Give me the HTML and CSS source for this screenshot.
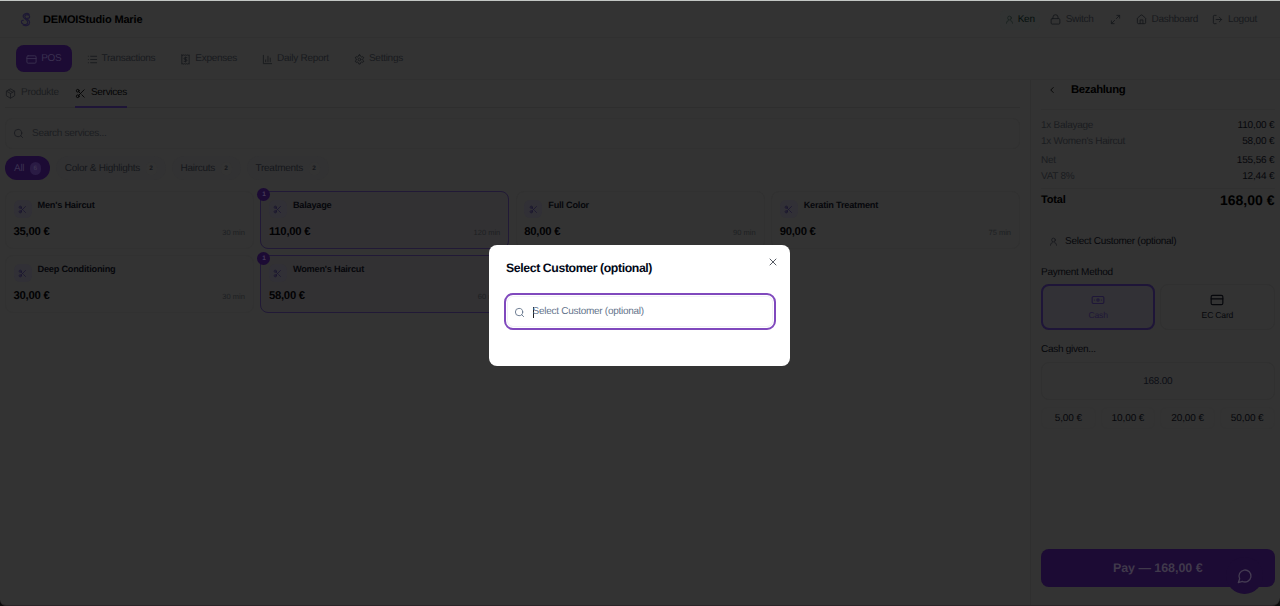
FILE: index.html
```html
<!DOCTYPE html>
<html lang="en">
<head>
<meta charset="utf-8">
<title>Studio Marie POS</title>
<link rel="stylesheet" href="styles.css">
</head>
<body>
<svg class="defs" aria-hidden="true">
  <symbol id="card" viewBox="0 0 24 24"><rect x="2" y="4" width="20" height="16" rx="2.5"/><path d="M2 10h20"/></symbol>
  <symbol id="list" viewBox="0 0 24 24"><path d="M8 5h13M8 12h13M8 19h13M3 5h.01M3 12h.01M3 19h.01"/></symbol>
  <symbol id="receipt" viewBox="0 0 24 24"><path d="M4 2v20l2-1 2 1 2-1 2 1 2-1 2 1 2-1 2 1V2l-2 1-2-1-2 1-2-1-2 1-2-1-2 1Z"/><path d="M15 8h-4a2 2 0 0 0 0 4h2a2 2 0 0 1 0 4H9M12 6.500v11"/></symbol>
  <symbol id="chart" viewBox="0 0 24 24"><path d="M3 3v18h18M8 17v-4M13 17V5M18 17V9"/></symbol>
  <symbol id="gear" viewBox="0 0 24 24"><path d="M12.220 2h-.440a2 2 0 0 0-2 2v.180a2 2 0 0 1-1 1.730l-.430.250a2 2 0 0 1-2 0l-.150-.080a2 2 0 0 0-2.730.730l-.220.380a2 2 0 0 0 .730 2.730l.150.100a2 2 0 0 1 1 1.720v.510a2 2 0 0 1-1 1.740l-.150.090a2 2 0 0 0-.730 2.730l.220.380a2 2 0 0 0 2.730.730l.150-.080a2 2 0 0 1 2 0l.430.250a2 2 0 0 1 1 1.730V20a2 2 0 0 0 2 2h.440a2 2 0 0 0 2-2v-.180a2 2 0 0 1 1-1.730l.430-.250a2 2 0 0 1 2 0l.150.080a2 2 0 0 0 2.730-.730l.220-.390a2 2 0 0 0-.730-2.730l-.150-.080a2 2 0 0 1-1-1.740v-.500a2 2 0 0 1 1-1.740l.150-.090a2 2 0 0 0 .730-2.730l-.220-.380a2 2 0 0 0-2.730-.730l-.150.080a2 2 0 0 1-2 0l-.430-.250a2 2 0 0 1-1-1.730V4a2 2 0 0 0-2-2z"/><circle cx="12" cy="12" r="3"/></symbol>
  <symbol id="user" viewBox="0 0 24 24"><circle cx="12" cy="8" r="5"/><path d="M4 22v-1a6 6 0 0 1 5-6M20 22v-1a6 6 0 0 0-5-6"/></symbol>
  <symbol id="lock" viewBox="0 0 24 24"><rect x="2.500" y="10" width="19" height="12" rx="2.500"/><path d="M6.500 10V7a5.500 5.500 0 0 1 11 0v3"/></symbol>
  <symbol id="expand" viewBox="0 0 24 24"><path d="M15 3h6v6M9 21H3v-6M21 3l-7 7M3 21l7-7"/></symbol>
  <symbol id="home" viewBox="0 0 24 24"><path d="M3 10a2 2 0 0 1 .7-1.500l7-6a2 2 0 0 1 2.600 0l7 6A2 2 0 0 1 21 10v9a2 2 0 0 1-2 2H5a2 2 0 0 1-2-2z"/><path d="M9 21v-8h6v8"/></symbol>
  <symbol id="logout" viewBox="0 0 24 24"><path d="M9 21H5a2 2 0 0 1-2-2V5a2 2 0 0 1 2-2h4M16 17l5-5-5-5M21 12H9"/></symbol>
  <symbol id="box" viewBox="0 0 24 24"><path d="M21 8a2 2 0 0 0-1-1.700l-7-4a2 2 0 0 0-2 0l-7 4A2 2 0 0 0 3 8v8a2 2 0 0 0 1 1.700l7 4a2 2 0 0 0 2 0l7-4a2 2 0 0 0 1-1.700ZM3.300 7l8.700 5 8.700-5M12 22V12M7.500 4.300l9 5.100"/></symbol>
  <symbol id="scissors" viewBox="0 0 24 24"><circle cx="6" cy="6" r="3"/><circle cx="6" cy="18" r="3"/><path d="M8.100 8.100 12 12M20 4 8.100 15.900M14.800 14.800 20 20"/></symbol>
  <symbol id="search" viewBox="0 0 24 24"><circle cx="11" cy="11" r="8"/><path d="m21 21-4.300-4.300"/></symbol>
  <symbol id="back" viewBox="0 0 24 24"><path d="m15 18-6-6 6-6"/></symbol>
  <symbol id="cash" viewBox="0 0 24 24"><rect x="2" y="6" width="20" height="12" rx="2"/><circle cx="12" cy="12" r="2"/><path d="M6 12h.01M18 12h.01"/></symbol>
  <symbol id="chat" viewBox="0 0 24 24"><path d="M7.900 20A9 9 0 1 0 4 16.100L2 22Z"/></symbol>
  <symbol id="close" viewBox="0 0 24 24"><path d="M18 6 6 18M6 6l12 12"/></symbol>
  <symbol id="logo" viewBox="0 0 24 32"><path d="M20 5C15 0 6 4 7 10c1 5 10 6 10 12 0 5-7 7-12 3M17 6c-4-2-8 2-6 5 2 4 10 5 10 11 0 7-9 9-14 6M17 13c5 1 5-5 2-7M7 18c-5-1-5 6-1 7"/></symbol>
</svg>

<div class="app">
  <header class="topbar">
    <div class="brand"><svg class="logo"><use href="#logo"/></svg><span>DEMOIStudio Marie</span></div>
    <div class="account">
      <span class="who"><svg class="i9"><use href="#user"/></svg>Ken</span>
      <span class="link switch"><svg><use href="#lock"/></svg>Switch</span>
      <span class="link full"><svg><use href="#expand"/></svg></span>
      <span class="link dash"><svg><use href="#home"/></svg>Dashboard</span>
      <span class="link"><svg><use href="#logout"/></svg>Logout</span>
    </div>
  </header>
  <nav class="mainnav">
    <a class="active"><svg><use href="#card"/></svg>POS</a>
    <a><svg><use href="#list"/></svg>Transactions</a>
    <a><svg><use href="#receipt"/></svg>Expenses</a>
    <a><svg><use href="#chart"/></svg>Daily Report</a>
    <a><svg><use href="#gear"/></svg>Settings</a>
  </nav>
  <div class="body">
    <main class="catalog">
      <div class="tabs">
        <a><svg><use href="#box"/></svg>Produkte</a>
        <a class="active"><svg><use href="#scissors"/></svg>Services</a>
      </div>
      <div class="search"><svg><use href="#search"/></svg>Search services...</div>
      <div class="chips">
        <span class="chip active">All<b>6</b></span>
        <span class="chip">Color &amp; Highlights<b>2</b></span>
        <span class="chip">Haircuts<b>2</b></span>
        <span class="chip">Treatments<b>2</b></span>
      </div>
      <div class="grid">
        <article class="item"><div class="name"><i><svg><use href="#scissors"/></svg></i>Men's Haircut</div><div class="meta"><strong>35,00 €</strong><small>30 min</small></div></article>
        <article class="item picked"><em>1</em><div class="name"><i><svg><use href="#scissors"/></svg></i>Balayage</div><div class="meta"><strong>110,00 €</strong><small>120 min</small></div></article>
        <article class="item"><div class="name"><i><svg><use href="#scissors"/></svg></i>Full Color</div><div class="meta"><strong>80,00 €</strong><small>90 min</small></div></article>
        <article class="item"><div class="name"><i><svg><use href="#scissors"/></svg></i>Keratin Treatment</div><div class="meta"><strong>90,00 €</strong><small>75 min</small></div></article>
        <article class="item"><div class="name"><i><svg><use href="#scissors"/></svg></i>Deep Conditioning</div><div class="meta"><strong>30,00 €</strong><small>30 min</small></div></article>
        <article class="item picked"><em>1</em><div class="name"><i><svg><use href="#scissors"/></svg></i>Women's Haircut</div><div class="meta"><strong>58,00 €</strong><small>60 min</small></div></article>
      </div>
    </main>
    <aside class="checkout">
      <h2><svg><use href="#back"/></svg>Bezahlung</h2>
      <dl class="lines">
        <div><dt>1x Balayage</dt><dd>110,00 €</dd></div>
        <div><dt>1x Women's Haircut</dt><dd>58,00 €</dd></div>
        <div class="net"><dt>Net</dt><dd>155,56 €</dd></div>
        <div><dt>VAT 8%</dt><dd>12,44 €</dd></div>
        <div class="total"><dt>Total</dt><dd>168,00 €</dd></div>
      </dl>
      <div class="customer"><svg class="i9"><use href="#user"/></svg>Select Customer (optional)</div>
      <div class="label">Payment Method</div>
      <div class="methods">
        <div class="method active"><svg><use href="#cash"/></svg>Cash</div>
        <div class="method"><svg><use href="#card"/></svg>EC Card</div>
      </div>
      <div class="label given">Cash given...</div>
      <div class="amount">168.00</div>
      <div class="quick"><span>5,00 €</span><span>10,00 €</span><span>20,00 €</span><span>50,00 €</span></div>
      <div class="pay">Pay — 168,00 €</div>
    </aside>
  </div>
  <div class="chat"><svg><use href="#chat"/></svg></div>
  <section class="dialog">
    <div class="dialog-head"><h1>Select Customer (optional)</h1><svg><use href="#close"/></svg></div>
    <div class="field"><svg><use href="#search"/></svg><span class="caret"></span>Select Customer (optional)</div>
  </section>
</div>
</body>
</html>
```

FILE: styles.css
```css
* { box-sizing: border-box; }
body {
  margin: 0;
  background: #0c0c0c;
  font: 10px/16px "Liberation Sans", Arial, sans-serif;
  letter-spacing: -0.27px;
  text-rendering: geometricPrecision;
  color: #06070b;
}
h1, h2, dl, dd { margin: 0; }
.defs { position: absolute; width: 0; height: 0; }
svg {
  width: 11px;
  height: 11px;
  flex: none;
  fill: none;
  stroke: currentColor;
  stroke-width: 2;
  stroke-linecap: round;
  stroke-linejoin: round;
}
svg.i9 { width: 9px; height: 9px; }

.app {
  position: relative;
  height: 606px;
  display: flex;
  flex-direction: column;
  overflow: hidden;
  background: #333;
  border-top: 1px solid #c3c7c4;
  border-bottom: 1px solid #2b2528;
  border-radius: 0 0 8px 6px;
}

.topbar {
  height: 37px;
  flex: none;
  padding: 1.500px 23px 0 20px;
  display: flex;
  align-items: center;
  justify-content: space-between;
  border-bottom: 1px solid #303030;
}
.brand { display: flex; align-items: center; gap: 12px; font-size: 11px; letter-spacing: -0.16px; font-weight: bold; color: #000; }
.logo { width: 11px; height: 15px; stroke: #1d1834; stroke-width: 2.500; }
.account { display: flex; align-items: center; color: #17191d; }
.account > span { display: flex; align-items: center; gap: 5px; }
.account .who { gap: 4px; height: 20px; padding: 0 5px; margin-right: 10px; background: #313333; border-radius: 5px; color: #05100d; }
.who svg { stroke: #15201d; }
.account .switch { margin-right: 16px; }
.account .full { margin-right: 15px; }
.account .dash { margin-right: 14px; }

.mainnav {
  height: 42px;
  flex: none;
  padding: 7px 16px 0 15.5px;
  display: flex;
  gap: 3.700px;
  border-bottom: 1px solid #303030;
}
.mainnav a {
  height: 27px;
  padding: 1.500px 10.7px 0;
  display: flex;
  align-items: center;
  gap: 4px;
  border-radius: 8px;
  color: #181a1e;
}
.mainnav a.active { background: #1c0b34; color: #3a3050; }

.body { flex: 1; display: flex; min-height: 0; }
.catalog { width: 1030px; flex: none; padding: 0 10px 0 5px; }
.tabs { display: flex; gap: 16px; height: 28px; border-bottom: 1px solid #2e2e2e; }
.tabs a { display: flex; align-items: center; gap: 5px; padding-top: 0.500px; color: #1b1d20; height: 28px; border-bottom: 2px solid transparent; }
.tabs a.active { color: #030304; border-color: #1e1537; }
.search {
  margin-top: 10px;
  height: 31px;
  padding-left: 7px;
  display: flex;
  align-items: center;
  gap: 8px;
  border: 1px solid #313131;
  border-radius: 7px;
  color: #1b1d21;
}
.chips { margin-top: 7px; display: flex; gap: 6px; }
.chip { height: 24px; padding: 1.500px 9px 0; display: flex; align-items: center; gap: 5.500px; border-radius: 12px; background: #323233; color: #15171b; }
.chip b { min-width: 11px; height: 13px; line-height: 13px; border-radius: 7px; text-align: center; font-size: 6.5px; letter-spacing: 0; background: #333; }
.chip.active { background: #1c0b34; color: #3b3150; }
.chip.active b { background: #2a1b44; }
.grid { margin-top: 11px; display: grid; grid-template-columns: repeat(4, 1fr); gap: 6px 6.500px; }
.item { position: relative; height: 58px; padding: 7px 8px 0 7.500px; border: 1px solid #313131; border-radius: 8px; }
.item.picked { border-color: #211936; background: #323133; }
.item em {
  position: absolute;
  left: -4px;
  top: -4px;
  width: 13px;
  height: 13px;
  border-radius: 50%;
  background: #1c0b34;
  color: #443a58;
  font: bold 6.500px/13px "Liberation Sans", Arial, sans-serif;
  text-align: center;
}
.name { display: flex; gap: 6px; font-size: 9.2px; letter-spacing: -0.22px; font-weight: bold; line-height: 13px; }
.name i { width: 18px; height: 18px; margin-top: 1px; display: grid; place-items: center; border-radius: 6px; background: #313036; color: #1a1430; }
.name svg { width: 9px; height: 9px; }
.meta { margin-top: 5px; display: flex; justify-content: space-between; align-items: center; line-height: 16px; }
.meta strong { font-size: 11.3px; letter-spacing: -0.24px; color: #020203; }
.meta small { font-size: 7.5px; letter-spacing: 0; color: #1d1f22; padding-top: 2px; }

.checkout { flex: 1; padding: 0 5.500px 18px 10px; border-left: 1px solid #2f2f2f; display: flex; flex-direction: column; }
.checkout h2 { height: 30px; padding: 1px 0 11px 6px; display: flex; align-items: center; gap: 14px; font-size: 11.3px; letter-spacing: -0.3px; line-height: 18px; color: #000; border-bottom: 1px solid #303030; }
.checkout h2 svg { width: 10px; height: 10px; }
.lines { padding-top: 8px; }
.lines > div { display: flex; justify-content: space-between; height: 16px; }
.lines dt { color: #1a1c20; }
.lines dd { letter-spacing: -0.150px; }
.lines .net { margin-top: 3px; }
.lines .total { margin-top: 3px; padding-top: 2px; height: 25px; border-top: 1px solid #303030; line-height: 18px; font-weight: bold; }
.lines .total dt { font-size: 11px; letter-spacing: -0.15px; color: #000; }
.lines .total dd { font-size: 14px; letter-spacing: 0; color: #000; }
.customer { margin-top: 16px; height: 24px; padding: 1.500px 0 0 8px; display: flex; align-items: center; gap: 7px; }
.customer svg { color: #15171c; }
.label { margin-top: 12px; }
.methods { margin-top: 3px; display: grid; grid-template-columns: 1fr 1fr; gap: 5px; }
.method { height: 46px; padding-top: 8px; display: flex; flex-direction: column; align-items: center; border: 1px solid #303030; border-radius: 8px; font-size: 8.600px; letter-spacing: -0.2px; line-height: 15px; }
.method svg { width: 14px; height: 14px; margin-bottom: 1px; }
.method.active { padding-top: 7px; border: 2px solid #1e1538; background: #323136; color: #1f1738; }
.label.given { margin-top: 12px; }
.amount { margin-top: 4px; height: 38px; padding-top: 1.500px; display: grid; place-items: center; border: 1px solid #303030; border-radius: 8px; color: #0c0e15; }
.quick { margin-top: 7px; display: grid; grid-template-columns: repeat(4, 1fr); gap: 5px; }
.quick span { height: 22px; padding-top: 1px; line-height: 20px; text-align: center; border: 1px solid #323232; border-radius: 6px; letter-spacing: -0.1px; }
.pay { margin-top: auto; height: 38px; line-height: 38px; border-radius: 8px; background: #1c0b34; color: #40394b; text-align: center; font-size: 12.500px; letter-spacing: -0.05px; font-weight: bold; }

.chat { position: absolute; left: 1226px; top: 556px; width: 37px; height: 37px; display: grid; place-items: center; border-radius: 50%; background: #1c0b34; color: #443b52; }
.chat svg { width: 16px; height: 16px; }

.dialog { position: absolute; left: 489px; top: 244px; width: 301px; height: 121px; padding: 14px 14px 0; border-radius: 8px; background: #fff; color: #020817; }
.dialog-head { display: flex; justify-content: space-between; padding-left: 3px; }
.dialog h1 { font-size: 12.300px; line-height: 18px; letter-spacing: -0.4px; }
.dialog-head svg { width: 12px; height: 12px; margin: -3px -3px 0 0; color: #555a63; }
.field {
  margin: 16px 0 0 0.500px;
  height: 37px;
  width: 272px;
  padding: 1.500px 0 0 8px;
  display: flex;
  align-items: center;
  border: 2px solid #8049bd;
  border-radius: 9px;
  color: #64748b;
  box-shadow: inset 0 0 0 1px #fff, inset 0 0 0 2px #f3f1f7;
}
.caret { width: 1px; height: 11px; margin-left: 8px; background: #222; margin-right: -1px; }
```
